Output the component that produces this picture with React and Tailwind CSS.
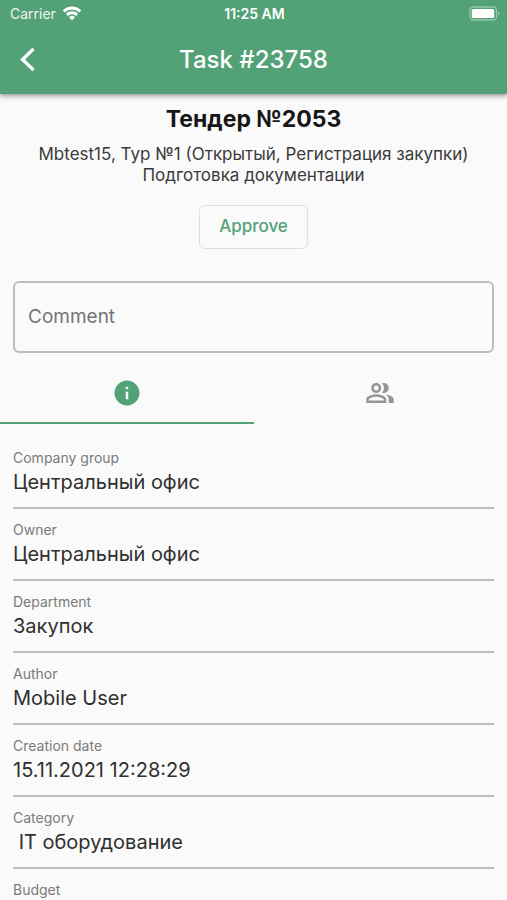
import { useState } from "react";
import { MdInfo, MdOutlinePeopleAlt } from "react-icons/md";

const fields = [
  { id: "company-group", label: "Company group", value: "Центральный офис" },
  { id: "owner", label: "Owner", value: "Центральный офис" },
  { id: "department", label: "Department", value: "Закупок" },
  { id: "author", label: "Author", value: "Mobile User" },
  { id: "creation-date", label: "Creation date", value: "15.11.2021 12:28:29" },
  { id: "category", label: "Category", value: " IT оборудование" },
  { id: "budget", label: "Budget", value: "" },
];

function WifiIcon() {
  return (
    <svg className="w-5 h-4" viewBox="0 0 20 16" fill="none" stroke="currentColor" strokeWidth="2.9" aria-hidden="true">
      <path d="M1.7 5.4a11.9 11.9 0 0 1 16.6 0" />
      <path d="M4.9 8.9a7.3 7.3 0 0 1 10.2 0" />
      <path d="M10 14.4l-2.9-3.1a4.1 4.1 0 0 1 5.8 0z" fill="currentColor" stroke="none" />
    </svg>
  );
}

function BatteryIcon() {
  return (
    <svg className="w-8 h-4" viewBox="0 0 32 16" fill="none" aria-hidden="true">
      <rect x="1" y="1" width="26.5" height="13" rx="3.5" stroke="white" strokeOpacity="0.4" strokeWidth="1.3" />
      <rect x="2.8" y="2.9" width="22.4" height="9.2" rx="1.6" fill="white" />
      <path d="M29.2 5.5v4.2c1.6-.6 1.6-3.6 0-4.2z" fill="white" fillOpacity="0.5" />
    </svg>
  );
}

function Header() {
  return (
    <header className="relative z-10 shrink-0 bg-[#53a177] text-white shadow-[0_2px_5px_rgba(0,0,0,0.4)]">
      {/* Status bar */}
      <div className="grid grid-cols-[1fr_auto_1fr] items-center h-7 pl-2 pr-1.5 text-sm">
        <div className="flex items-center gap-1.5 pl-0.5">
          <span className="text-white/90">Carrier</span>
          <WifiIcon />
        </div>
        <span className="text-center font-semibold">11:25 AM</span>
        <div className="flex justify-end">
          <BatteryIcon />
        </div>
      </div>

      {/* Title bar */}
      <div className="grid grid-cols-[56px_1fr_56px] items-center h-[66px] pb-0.5">
        <button type="button" aria-label="Back" className="flex items-center justify-center h-12">
          <svg className="w-6 h-6" viewBox="0 0 24 24" fill="none" stroke="currentColor" strokeWidth="3.4" aria-hidden="true">
            <path d="M17.6 .9L6.6 11.5l11 10.6" />
          </svg>
        </button>
        <h1 className="text-center text-2xl font-medium">Task #23758</h1>
      </div>
    </header>
  );
}

function Field({ id, label, value }) {
  return (
    <div className="h-[72px] pt-[11px] border-b-2 border-[#bdbdbd]">
      <label htmlFor={id} className="block text-sm text-[#7b7b7b]">
        {label}
      </label>
      <input
        id={id}
        readOnly
        defaultValue={value}
        className="block w-full h-7 bg-transparent text-xl text-[#303030] outline-none"
      />
    </div>
  );
}

export default function App() {
  const [tab, setTab] = useState("info");

  return (
    <div className="flex flex-col h-screen bg-[#fafafa] font-['Inter',sans-serif]">
      <Header />

      <main className="flex-1 min-h-0 overflow-y-auto [scrollbar-width:none]">
        <section className="flex flex-col items-center px-3 pt-[9px] text-center">
          <h2 className="text-[23px] leading-8 font-bold text-[#161616]">Тендер №2053</h2>
          <p className="mt-[9px] text-[17px] leading-[21px] text-[#3a3a3a]">
            Mbtest15, Тур №1 (Открытый, Регистрация закупки)
            <br />
            Подготовка документации
          </p>
          <button
            type="button"
            className="mt-[19px] h-11 px-[19px] border border-[#dfdfdf] rounded-md text-[17px] font-medium text-[#53a177]"
          >
            Approve
          </button>
        </section>

        <div className="px-[13px] pt-8">
          <textarea
            aria-label="Comment"
            placeholder="Comment"
            rows={1}
            className="block w-full h-[72px] px-[13px] py-5 border-2 border-[#bdbdbd] rounded-md bg-transparent text-[19px] leading-7 text-[#303030] placeholder:text-[#757575] resize-none outline-none"
          />
        </div>

        {/* Tabs */}
        <div role="tablist" className="grid grid-cols-2 h-[60px] mt-[11px]">
          <button
            type="button"
            role="tab"
            aria-label="Information"
            aria-selected={tab === "info"}
            onClick={() => setTab("info")}
            className={`flex items-center justify-center border-b-2 ${
              tab === "info" ? "border-[#53a177] text-[#53a177]" : "border-transparent text-[#959595]"
            }`}
          >
            <MdInfo className="w-[30px] h-[30px]" />
          </button>
          <button
            type="button"
            role="tab"
            aria-label="Participants"
            aria-selected={tab === "people"}
            onClick={() => setTab("people")}
            className={`flex items-center justify-center border-b-2 ${
              tab === "people" ? "border-[#53a177] text-[#53a177]" : "border-transparent text-[#959595]"
            }`}
          >
            <MdOutlinePeopleAlt className="w-[30px] h-[30px]" />
          </button>
        </div>

        {tab === "info" && (
          <div className="px-[13px] pt-[13px]">
            {fields.map((field) => (
              <Field key={field.id} {...field} />
            ))}
          </div>
        )}
      </main>
    </div>
  );
}
